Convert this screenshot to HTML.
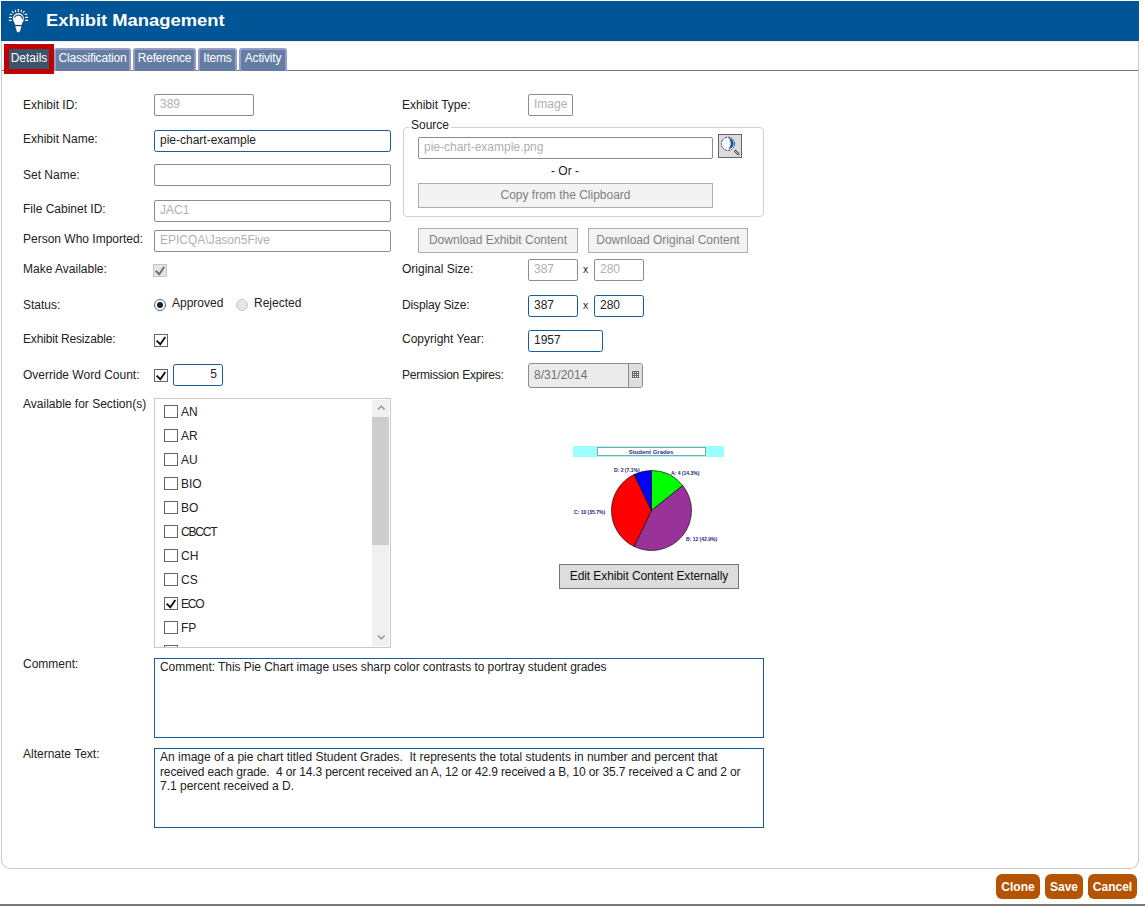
<!DOCTYPE html>
<html><head><meta charset="utf-8">
<style>
*{box-sizing:border-box;margin:0;padding:0}
html,body{width:1145px;height:906px;overflow:hidden;background:#fff;font-family:"Liberation Sans",sans-serif;font-size:12px;color:#222}
.a{position:absolute}
#hdr{left:1px;top:1px;width:1138px;height:40px;background:#005596}
#title{left:46px;top:11px;color:#fff;font-weight:bold;font-size:17px;white-space:nowrap;line-height:20px;transform:scaleX(1.08);transform-origin:0 0}
#panel{left:1px;top:41px;width:1138px;height:828px;border:1px solid #c8c8c8;border-top:none;border-radius:0 0 9px 9px}
#tabline{left:2px;top:70px;width:1136px;height:1px;background:#777}
.tab{top:48px;height:23px;background:#647da2;border:2px solid #969bc8;border-bottom:none;border-radius:3px 3px 0 0;color:#fff;font-size:12px;letter-spacing:-0.2px;line-height:16px;text-align:center;white-space:nowrap}
#redbox{left:4px;top:44px;width:50px;height:30px;background:#c00000}
#dtab{left:9px;top:49px;width:40px;height:20px;background:#3d526b;color:#fff;font-size:12px;line-height:18px;text-align:center;white-space:nowrap}
.lbl{white-space:nowrap;color:#222;line-height:14px}
.inp{border:1px solid #8c8c8c;border-radius:2px;height:22px;background:#fff;padding-left:5px;line-height:18px;white-space:nowrap;color:#222}
.dis{color:#b0b0b0}
.foc{border:1.5px solid #135a9e;border-radius:2.5px}
.btn{background:#f3f3f3;border:1px solid #adadad;color:#808080;text-align:center;line-height:22px;white-space:nowrap}
.cb{width:14px;height:13px;border:1px solid #666;background:#fff}
.ta{border:1.5px solid #135a9e;background:#fff;padding:1px 5px;line-height:14.5px;color:#222}
.obtn{background:#b55300;border-radius:6px;color:#fff;font-weight:bold;font-size:12px;text-align:center;line-height:26px;height:25px;top:874px}
.cbd{width:14px;height:13px;border:1px solid #c4c4c4;background:#e6e6e6}
.rad{width:12px;height:12px;border-radius:50%}
.rad.on{border:1px solid #2e6fae;background:#fff}
.rad.on::after{content:"";position:absolute;left:2px;top:2px;width:6px;height:6px;border-radius:50%;background:#222}
.rad.off{border:1px solid #c8c8c8;background:#e6e6e6}
</style></head><body>
<div class="a" id="hdr"></div>
<svg class="a" style="left:4px;top:4px" width="32" height="32" viewBox="0 0 32 32">
  <g stroke="#fff" stroke-width="1.15" stroke-linecap="round">
    <line x1="14.3" y1="5.2" x2="14.3" y2="7.6"/>
    <line x1="11.5" y1="6.2" x2="11.6" y2="7.6"/>
    <line x1="17.3" y1="6.2" x2="17.2" y2="7.6"/>
    <line x1="8.4" y1="7.4" x2="9.2" y2="8.6"/>
    <line x1="20.2" y1="7.4" x2="19.4" y2="8.6"/>
    <line x1="6.2" y1="10.4" x2="7.6" y2="10.4"/>
    <line x1="5.4" y1="13.4" x2="7.2" y2="13.4"/>
    <line x1="5.4" y1="16.4" x2="7.2" y2="16.4"/>
    <line x1="21.2" y1="10.4" x2="22.8" y2="10.4"/>
    <line x1="21.5" y1="13.4" x2="23.6" y2="13.4"/>
    <line x1="21.5" y1="16.4" x2="23.6" y2="16.4"/>
  </g>
  <circle cx="14.4" cy="14.6" r="5.8" fill="#fff" stroke="#1c2f4a" stroke-width="0.5"/>
  <path d="M10.2 18 L18.6 18 L17.6 21 L11.2 21 Z" fill="#fff"/>
  <line x1="11" y1="21.4" x2="17.8" y2="21.4" stroke="#2a3a55" stroke-width="0.6"/>
  <path d="M11 22 L17.7 22 L16.6 26 L15.8 28.2 L12.9 28.2 L12.1 26 Z" fill="#fff" stroke="#1c2f4a" stroke-width="0.4"/>
  <path d="M10.4 13.6 A4.3 4.3 0 0 1 18.6 15.2" stroke="#1a5a9a" stroke-width="1.2" fill="none"/>
</svg>
<div class="a" id="title">Exhibit Management</div>
<div class="a" id="panel"></div>
<div class="a" style="left:1px;top:41px;width:1138px;height:1px;background:#eeeae6"></div>
<div class="a" id="tabline"></div>
<div class="a" id="redbox"></div>
<div class="a" id="dtab">Details</div>
<div class="a tab" style="left:54px;width:77px">Classification</div>
<div class="a tab" style="left:133px;width:63px">Reference</div>
<div class="a tab" style="left:198px;width:39px">Items</div>
<div class="a tab" style="left:239px;width:48px">Activity</div>

<!-- left column -->
<div class="a lbl" style="left:23px;top:98px">Exhibit ID:</div>
<div class="a inp dis" style="left:154px;top:94px;width:100px">389</div>
<div class="a lbl" style="left:23px;top:132px">Exhibit Name:</div>
<div class="a inp foc" style="left:154px;top:130px;width:237px">pie-chart-example</div>
<div class="a lbl" style="left:23px;top:168px">Set Name:</div>
<div class="a inp" style="left:154px;top:164px;width:237px"></div>
<div class="a lbl" style="left:23px;top:202px">File Cabinet ID:</div>
<div class="a inp dis" style="left:154px;top:200px;width:237px">JAC1</div>
<div class="a lbl" style="left:23px;top:232px">Person Who Imported:</div>
<div class="a inp dis" style="left:154px;top:230px;width:237px">EPICQA\Jason5Five</div>
<div class="a lbl" style="left:23px;top:262px">Make Available:</div>
<div class="a lbl" style="left:23px;top:298px">Status:</div>
<div class="a lbl" style="left:23px;top:332px;letter-spacing:-0.17px">Exhibit Resizable:</div>
<div class="a lbl" style="left:23px;top:368px">Override Word Count:</div>
<div class="a lbl" style="left:23px;top:397px">Available for Section(s)</div>
<div class="a lbl" style="left:23px;top:657px">Comment:</div>
<div class="a lbl" style="left:23px;top:747px">Alternate Text:</div>

<!-- right column -->
<div class="a lbl" style="left:402px;top:98px">Exhibit Type:</div>
<div class="a inp dis" style="left:528px;top:94px;width:45px">Image</div>
<div class="a lbl" style="left:402px;top:262px">Original Size:</div>
<div class="a lbl" style="left:402px;top:298px;letter-spacing:-0.15px">Display Size:</div>
<div class="a lbl" style="left:402px;top:332px">Copyright Year:</div>
<div class="a lbl" style="left:402px;top:368px;letter-spacing:-0.23px">Permission Expires:</div>


<!-- left controls -->
<div class="a cbd" style="left:153px;top:264px"><svg width="12" height="11" viewBox="0 0 12 11" style="position:absolute;left:0;top:0"><path d="M1.6 5.8 L5.3 9.2 L10.2 1.8" stroke="#6e6e6e" stroke-width="1.9" fill="none"/></svg></div>
<div class="a rad on" style="left:154px;top:299px"></div>
<div class="a lbl" style="left:172px;top:296px">Approved</div>
<div class="a rad off" style="left:236px;top:299px"></div>
<div class="a lbl" style="left:254px;top:296px">Rejected</div>
<div class="a cb" style="left:154px;top:334px"><svg width="12" height="12" viewBox="0 0 12 12" style="position:absolute;left:0;top:0"><path d="M1.6 5.6 L5.3 9.2 L10.3 2" stroke="#111" stroke-width="1.9" fill="none"/></svg></div>
<div class="a cb" style="left:154px;top:369px"><svg width="12" height="12" viewBox="0 0 12 12" style="position:absolute;left:0;top:0"><path d="M1.6 5.6 L5.3 9.2 L10.3 2" stroke="#111" stroke-width="1.9" fill="none"/></svg></div>
<div class="a inp foc" style="left:173px;top:364px;width:50px;text-align:right;padding-right:5px">5</div>

<!-- sections list -->
<div class="a" id="list" style="left:154px;top:398px;width:237px;height:250px;border:1px solid #c8c8c8;overflow:hidden;background:#fff">
  <div class="a" style="left:217px;top:1px;width:17px;height:246px;background:#f0f0f0"></div>
  <div class="a" style="left:217px;top:18px;width:17px;height:128px;background:#cdcdcd"></div>
  <svg class="a" style="left:222px;top:5px" width="10" height="7" viewBox="0 0 10 7"><path d="M1 5.5 L4.3 2 L7.6 5.5" stroke="#888" stroke-width="1.1" fill="none"/></svg>
  <svg class="a" style="left:222px;top:235px" width="10" height="7" viewBox="0 0 10 7"><path d="M1 1.5 L4.3 5 L7.6 1.5" stroke="#888" stroke-width="1.1" fill="none"/></svg>
  <div class="a cb" style="left:9px;top:6px"></div><div class="a lbl" style="left:26px;top:6px">AN</div>
  <div class="a cb" style="left:9px;top:30px"></div><div class="a lbl" style="left:26px;top:30px">AR</div>
  <div class="a cb" style="left:9px;top:54px"></div><div class="a lbl" style="left:26px;top:54px">AU</div>
  <div class="a cb" style="left:9px;top:78px"></div><div class="a lbl" style="left:26px;top:78px">BIO</div>
  <div class="a cb" style="left:9px;top:102px"></div><div class="a lbl" style="left:26px;top:102px">BO</div>
  <div class="a cb" style="left:9px;top:126px"></div><div class="a lbl" style="left:26px;top:126px;letter-spacing:-1.2px">CBCCT</div>
  <div class="a cb" style="left:9px;top:150px"></div><div class="a lbl" style="left:26px;top:150px">CH</div>
  <div class="a cb" style="left:9px;top:174px"></div><div class="a lbl" style="left:26px;top:174px">CS</div>
  <div class="a cb" style="left:9px;top:198px"><svg width="12" height="12" viewBox="0 0 12 12" style="position:absolute;left:0;top:0"><path d="M1.6 5.6 L5.3 9.2 L10.3 2" stroke="#111" stroke-width="1.9" fill="none"/></svg></div><div class="a lbl" style="left:26px;top:198px;letter-spacing:-1.2px">ECO</div>
  <div class="a cb" style="left:9px;top:222px"></div><div class="a lbl" style="left:26px;top:222px">FP</div>
  <div class="a cb" style="left:9px;top:246px"></div>

</div>

<!-- source fieldset -->
<div class="a" style="left:403px;top:127px;width:361px;height:90px;border:1px solid #cfcfcf;border-radius:4px"></div>
<div class="a" style="left:409px;top:120px;width:42px;height:12px;background:#fff"></div>
<div class="a lbl" style="left:411px;top:118px;font-size:12px">Source</div>
<div class="a inp dis" style="left:418px;top:137px;width:295px;height:22px">pie-chart-example.png</div>
<svg class="a" style="left:718px;top:134px" width="24" height="24" viewBox="0 0 24 24"><rect x="0.5" y="0.5" width="23" height="23" fill="#dcdcdc" stroke="#666" stroke-width="1"/><circle cx="10" cy="9.8" r="6.6" fill="#fff"/><path d="M10.4 4.1 A5.3 5.3 0 0 1 10.4 14.7 A7 7 0 0 0 10.4 4.1 Z" fill="#0f55a8"/><circle cx="10" cy="9.8" r="6.6" fill="none" stroke="#3a4560" stroke-width="1" stroke-dasharray="2 0.8"/><line x1="16.6" y1="16.4" x2="21" y2="20.8" stroke="#333" stroke-width="2.3"/><line x1="16.8" y1="16.6" x2="20.6" y2="20.4" stroke="#fff" stroke-width="0.9"/></svg>
<div class="a lbl" style="left:551px;top:164px">- Or -</div>
<div class="a btn" style="left:418px;top:183px;width:295px;height:25px">Copy from the Clipboard</div>
<div class="a btn" style="left:418px;top:228px;width:160px;height:25px">Download Exhibit Content</div>
<div class="a btn" style="left:588px;top:228px;width:160px;height:25px">Download Original Content</div>

<!-- sizes -->
<div class="a inp dis" style="left:528px;top:259px;width:50px">387</div>
<div class="a lbl" style="left:583px;top:262px;font-size:10.5px">x</div>
<div class="a inp dis" style="left:594px;top:259px;width:50px">280</div>
<div class="a inp foc" style="left:528px;top:295px;width:50px">387</div>
<div class="a lbl" style="left:583px;top:298px;font-size:10.5px">x</div>
<div class="a inp foc" style="left:594px;top:295px;width:50px">280</div>
<div class="a inp foc" style="left:528px;top:330px;width:75px">1957</div>
<div class="a inp" style="left:528px;top:363px;width:115px;height:25px;background:#ebebeb;color:#707070;line-height:23px;border-radius:3px">8/31/2014</div><div class="a" style="left:629px;top:364px;width:13px;height:23px;background:#dedede;border-radius:0 2px 2px 0"></div>
<div class="a" style="left:628px;top:364px;width:1px;height:23px;background:#8c8c8c"></div>
<svg class="a" style="left:632px;top:371px" width="7" height="9" viewBox="0 0 7 9"><rect x="0" y="0" width="7" height="7" rx="0.6" fill="#666"/><rect x="1" y="1" width="1" height="1" fill="#fff"/><rect x="1" y="3" width="1" height="1" fill="#fff"/><rect x="1" y="5" width="1" height="1" fill="#fff"/><rect x="3" y="1" width="1" height="1" fill="#fff"/><rect x="3" y="3" width="1" height="1" fill="#fff"/><rect x="3" y="5" width="1" height="1" fill="#fff"/><rect x="5" y="1" width="1" height="1" fill="#fff"/><rect x="5" y="3" width="1" height="1" fill="#fff"/><rect x="5" y="5" width="1" height="1" fill="#fff"/><rect x="0" y="7.2" width="7" height="1" fill="#f4f4f4"/></svg>

<!-- pie -->
<svg class="a" style="left:573px;top:445px" width="151" height="107" viewBox="0 0 151 107">
<rect x="0" y="1" width="151" height="11" fill="#99ffff"/><rect x="24.5" y="2.5" width="108" height="8" fill="#fff" stroke="#888" stroke-width="0.8"/><text x="78" y="9" font-size="6" fill="#223399" text-anchor="middle" font-weight="bold" font-family="Liberation Sans">Student Grades</text>
<path d="M78.5 65.5 L78.50 25.50 A40 40 0 0 1 109.77 40.56 Z" fill="#00ff00" stroke="#111" stroke-width="0.7"/>
<path d="M78.5 65.5 L109.77 40.56 A40 40 0 0 1 61.15 101.54 Z" fill="#993399" stroke="#111" stroke-width="0.7"/>
<path d="M78.5 65.5 L61.15 101.54 A40 40 0 0 1 61.15 29.46 Z" fill="#ff0000" stroke="#111" stroke-width="0.7"/>
<path d="M78.5 65.5 L61.15 29.46 A40 40 0 0 1 78.50 25.50 Z" fill="#0000ff" stroke="#111" stroke-width="0.7"/>
<g font-size="5" fill="#22228a" font-weight="bold" font-family="Liberation Sans"><text x="98" y="30">A: 4 (14.3%)</text><text x="41" y="27">D: 2 (7.1%)</text><text x="1" y="69">C: 10 (35.7%)</text><text x="113" y="96">B: 12 (42.9%)</text></g>
</svg>
<div class="a" style="left:559px;top:564px;width:180px;height:25px;background:#dddddd;border:1px solid #777;text-align:center;line-height:23px;color:#111;font-size:12px;letter-spacing:-0.1px;white-space:nowrap">Edit Exhibit Content Externally</div>

<!-- textareas -->
<div class="a ta" style="left:154px;top:658px;width:610px;height:80px;letter-spacing:-0.05px">Comment: This Pie Chart image uses sharp color contrasts to portray student grades</div>
<div class="a ta" style="left:154px;top:748px;width:610px;height:80px"><div style="white-space:nowrap">An image of a pie chart titled Student Grades.&nbsp; It represents the total students in number and percent that</div><div style="white-space:nowrap;letter-spacing:-0.13px">received each grade.&nbsp; 4 or 14.3 percent received an A, 12 or 42.9 received a B, 10 or 35.7 received a C and 2 or</div><div style="white-space:nowrap">7.1 percent received a D.</div></div>

<!-- bottom -->
<div class="a" style="left:0;top:904px;width:1145px;height:2px;background:#777"></div>
<div class="a obtn" style="left:996px;width:44px">Clone</div>
<div class="a obtn" style="left:1045px;width:38px">Save</div>
<div class="a obtn" style="left:1088px;width:49px">Cancel</div>
</body></html>
